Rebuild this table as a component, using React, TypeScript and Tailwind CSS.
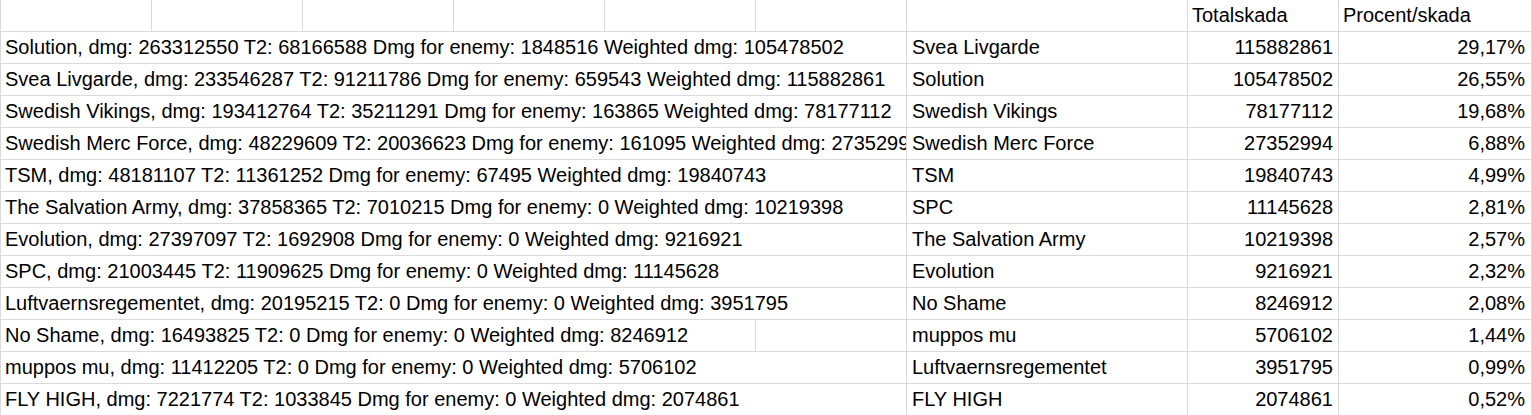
const rows = [
    { log: "Solution, dmg: 263312550 T2: 68166588 Dmg for enemy: 1848516 Weighted dmg: 105478502", team: "Svea Livgarde", total: "115882861", pct: "29,17%" },
    { log: "Svea Livgarde, dmg: 233546287 T2: 91211786 Dmg for enemy: 659543 Weighted dmg: 115882861", team: "Solution", total: "105478502", pct: "26,55%" },
    { log: "Swedish Vikings, dmg: 193412764 T2: 35211291 Dmg for enemy: 163865 Weighted dmg: 78177112", team: "Swedish Vikings", total: "78177112", pct: "19,68%" },
    { log: "Swedish Merc Force, dmg: 48229609 T2: 20036623 Dmg for enemy: 161095 Weighted dmg: 27352994", team: "Swedish Merc Force", total: "27352994", pct: "6,88%" },
    { log: "TSM, dmg: 48181107 T2: 11361252 Dmg for enemy: 67495 Weighted dmg: 19840743", team: "TSM", total: "19840743", pct: "4,99%" },
    { log: "The Salvation Army, dmg: 37858365 T2: 7010215 Dmg for enemy: 0 Weighted dmg: 10219398", team: "SPC", total: "11145628", pct: "2,81%" },
    { log: "Evolution, dmg: 27397097 T2: 1692908 Dmg for enemy: 0 Weighted dmg: 9216921", team: "The Salvation Army", total: "10219398", pct: "2,57%" },
    { log: "SPC, dmg: 21003445 T2: 11909625 Dmg for enemy: 0 Weighted dmg: 11145628", team: "Evolution", total: "9216921", pct: "2,32%" },
    { log: "Luftvaernsregementet, dmg: 20195215 T2: 0 Dmg for enemy: 0 Weighted dmg: 3951795", team: "No Shame", total: "8246912", pct: "2,08%" },
    { log: "No Shame, dmg: 16493825 T2: 0 Dmg for enemy: 0 Weighted dmg: 8246912", team: "muppos mu", total: "5706102", pct: "1,44%", short: true },
    { log: "muppos mu, dmg: 11412205 T2: 0 Dmg for enemy: 0 Weighted dmg: 5706102", team: "Luftvaernsregementet", total: "3951795", pct: "0,99%" },
    { log: "FLY HIGH, dmg: 7221774 T2: 1033845 Dmg for enemy: 0 Weighted dmg: 2074861", team: "FLY HIGH", total: "2074861", pct: "0,52%" },
]

const cell = "h-8 border-r border-b border-[#dadada] overflow-hidden whitespace-nowrap leading-[31px]"

const App = () => {
    return (
        <div
            className="w-[1532px] h-[415px] overflow-hidden bg-white text-black text-[20px]"
            style={{ fontFamily: '"Liberation Sans", Arial, sans-serif' }}
        >
            <div className="grid grid-cols-[152px_151px_151px_151px_151px_151px_281px_151px_193px]">
                {/* header row */}
                <div className={`${cell} border-l`}></div>
                <div className={cell}></div>
                <div className={cell}></div>
                <div className={cell}></div>
                <div className={cell}></div>
                <div className={cell}></div>
                <div className={cell}></div>
                <div className={`${cell} pl-[4px] leading-[28px]`}>Totalskada</div>
                <div className={`${cell} pl-[4px] leading-[28px]`}>Procent/skada</div>

                {rows.map((r) => (
                    <div key={r.log} className="contents">
                        <div className={`${cell} border-l pl-[4px] ${r.short ? "col-span-5" : "col-span-6"}`}>
                            {r.log}
                        </div>
                        {r.short && <div className={cell}></div>}
                        <div className={`${cell} pl-[5px]`}>{r.team}</div>
                        <div className={`${cell} pr-[5px] text-right`}>{r.total}</div>
                        <div className={`${cell} pr-[6px] text-right`}>{r.pct}</div>
                    </div>
                ))}
            </div>
        </div>
    )
}

export default App
